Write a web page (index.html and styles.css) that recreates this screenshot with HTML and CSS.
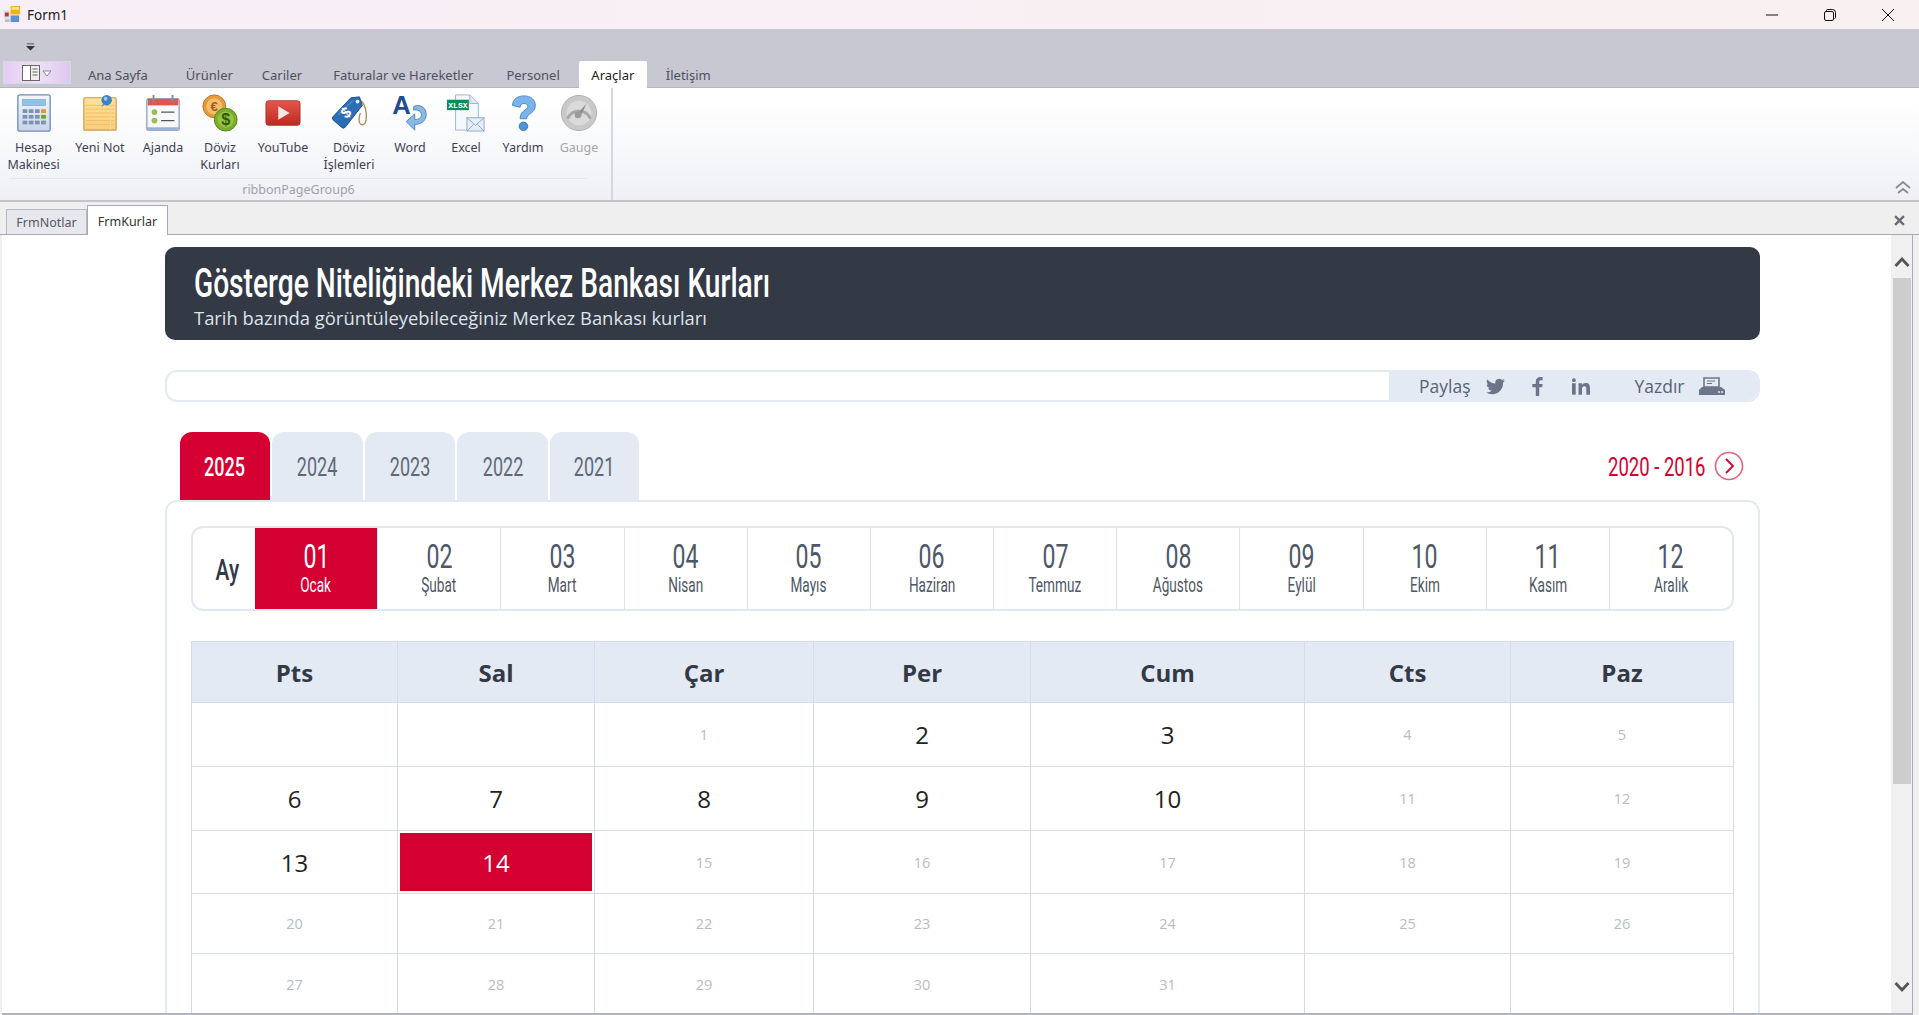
FILE: index.html
```html
<!DOCTYPE html>
<html>
<head>
  <meta charset="UTF-8">
  <title>Form1</title>
  <link rel="stylesheet" href="styles.css">
</head>
<body>
  <div class="window">
    <div class="titlebar">
      <svg class="app-icon" viewBox="0 0 18 18"><rect x="0" y="5" width="6" height="8" fill="#d8d8de"/><rect x="1" y="7" width="4" height="4" fill="#c8322a"/><rect x="7" y="0" width="10" height="9" fill="#f2b21c"/><rect x="8" y="1" width="8" height="3" fill="#fbe27a"/><rect x="7" y="10" width="9" height="7" fill="#5c8fd6"/><rect x="1" y="14" width="5" height="3" fill="#bcbcc6"/></svg>
      <span class="form-name">Form1</span>
      <div class="win-buttons">
        <svg viewBox="0 0 12 12"><path d="M0 6h12" stroke="#111" fill="none"/></svg>
        <svg viewBox="0 0 12 12"><path d="M2.5 2.5V1.5q0-1 1-1h5q3 0 3 3v5q0 1-1 1" stroke="#111" fill="none"/><rect x=".5" y="2.5" width="9" height="9" rx="1.5" stroke="#111" fill="none"/></svg>
        <svg viewBox="0 0 12 12"><path d="M0 0l12 12M12 0L0 12" stroke="#111" fill="none"/></svg>
      </div>
    </div>

    <div class="ribbon-head">
      <div class="qat"><svg viewBox="0 0 10 8"><path d="M1 0h8v1H1zM0 3h10L5 8z" fill="#333"/></svg></div>
      <div class="ribbon-tabs">
        <div class="app-btn"><svg viewBox="0 0 30 16" width="30" height="16"><rect x=".5" y=".5" width="8" height="15" fill="#fff" stroke="#666"/><rect x="8.5" y=".5" width="9" height="15" fill="#eee" stroke="#666"/><path d="M10.5 4h5M10.5 7h5M10.5 10h5" stroke="#666"/><path d="M21 6h8l-4 5z" fill="#fff" stroke="#8a8a9a"/></svg></div>
        <span class="rtab tab-ana">Ana Sayfa</span>
        <span class="rtab tab-urun">Ürünler</span>
        <span class="rtab tab-cari">Cariler</span>
        <span class="rtab tab-fat">Faturalar ve Hareketler</span>
        <span class="rtab tab-per">Personel</span>
        <span class="rtab active">Araçlar</span>
        <span class="rtab tab-ilt">İletişim</span>
      </div>
    </div>

    <div class="ribbon-panel">
      <div class="group">
        <div class="tools">
          <div class="tool">
            <svg viewBox="0 0 40 40"><defs><linearGradient id="calc" x1="0" y1="0" x2="0" y2="1"><stop offset="0" stop-color="#f4f6fb"/><stop offset="1" stop-color="#c9d5ea"/></linearGradient></defs><rect x="3" y="1" width="34" height="38" rx="2" fill="url(#calc)" stroke="#6f8cbb" stroke-width="1.4"/><rect x="8" y="6" width="24" height="6" fill="#8dc3e8" stroke="#6b9ac4" stroke-width=".6"/><g fill="#7f92b5"><rect x="8" y="16" width="5" height="4"/><rect x="14.500" y="16" width="5" height="4"/><rect x="21" y="16" width="5" height="4"/><rect x="8" y="22" width="5" height="4"/><rect x="14.500" y="22" width="5" height="4"/><rect x="21" y="22" width="5" height="4"/><rect x="8" y="28" width="5" height="4"/><rect x="14.500" y="28" width="5" height="4"/><rect x="21" y="28" width="5" height="4"/><rect x="27.500" y="28" width="5" height="4"/></g><rect x="27.500" y="16" width="5" height="4" fill="#de9335"/><rect x="27.500" y="22" width="5" height="4" fill="#6ea32e"/></svg>
            <span>Hesap<br>Makinesi</span>
          </div>
          <div class="tool">
            <svg viewBox="0 0 40 40"><defs><linearGradient id="note" x1="0" y1="0" x2="0" y2="1"><stop offset="0" stop-color="#fde29a"/><stop offset="1" stop-color="#f9cf7c"/></linearGradient></defs><rect x="3" y="4" width="34" height="34" rx="1" fill="url(#note)" stroke="#c99a4c" stroke-width="1.2"/><path d="M5 12h30M5 16h30M5 20h30M5 24h30M5 28h30M5 32h30" stroke="#f3b55c" stroke-width=".8"/><path d="M31 4v34" stroke="#f0d79c"/><path d="M22 13l5-6" stroke="#6d8fb5" stroke-width="1.5"/><circle cx="27" cy="6.500" r="5.500" fill="#3f7fc4"/><circle cx="26" cy="5" r="2" fill="#9cc8ee"/></svg>
            <span>Yeni Not</span>
          </div>
          <div class="tool">
            <svg viewBox="0 0 40 40"><rect x="3" y="5" width="34" height="33" rx="1.500" fill="#f7f8fc" stroke="#7c92bf" stroke-width="1.2"/><path d="M4 5h32v7H4z" fill="#e2554e"/><rect x="3" y="35" width="34" height="3" fill="#9db1d4"/><path d="M10 1v8M30 1v8" stroke="#8a8a8a" stroke-width="2"/><circle cx="11" cy="19" r="3" fill="#9dbb52"/><circle cx="11" cy="28" r="3" fill="#9dbb52"/><path d="M18 19h14M18 28h14" stroke="#555" stroke-width="1.400"/></svg>
            <span>Ajanda</span>
          </div>
          <div class="tool">
            <svg viewBox="0 0 40 40"><circle cx="14" cy="13" r="12" fill="#e89a3a" stroke="#b9732a"/><circle cx="14" cy="13" r="8.500" fill="#f5bd70"/><text x="14" y="18" font-size="14" text-anchor="middle" fill="#a85a12" font-family="Liberation Sans" font-weight="700">€</text><circle cx="26" cy="27" r="12" fill="#7cab2e" stroke="#5b8420"/><circle cx="26" cy="27" r="8.500" fill="#98c340"/><text x="26" y="33" font-size="17" text-anchor="middle" fill="#2e5a10" font-family="Liberation Sans" font-weight="700">$</text></svg>
            <span>Döviz<br>Kurları</span>
          </div>
          <div class="tool">
            <svg viewBox="0 0 40 40"><defs><linearGradient id="yt" x1="0" y1="0" x2="0" y2="1"><stop offset="0" stop-color="#e2574a"/><stop offset="1" stop-color="#bd2a20"/></linearGradient></defs><rect x="2" y="7" width="36" height="26" rx="3" fill="url(#yt)" stroke="#a72a22" stroke-width=".8"/><path d="M15 13l12 7-12 7z" fill="#f7e9e4"/></svg>
            <span>YouTube</span>
          </div>
          <div class="tool">
            <svg viewBox="0 0 40 40"><path d="M32 7c5 3 7 12 6 20-1 6-5 7-7 3-1-3 0-8 1-10" fill="none" stroke="#b08a5a" stroke-width="1.400"/><path d="M3 24L22 4l9-1 3 9-18 23q-2 2-4 0L3 27q-1-2 0-3z" fill="#2c6db5" stroke="#1f4f8c"/><path d="M9 22L24 7" stroke="#6ea3dd"/><circle cx="29" cy="8" r="2" fill="#e8eef6"/><text x="17" y="25" font-size="16" text-anchor="middle" fill="#fff" font-family="Liberation Sans" font-weight="700" transform="rotate(-40 17 20)">$</text></svg>
            <span>Döviz<br>İşlemleri</span>
          </div>
          <div class="tool">
            <svg viewBox="0 0 40 40"><text x="11" y="21" font-size="27" text-anchor="middle" fill="#1f4d8f" font-family="Liberation Sans" font-weight="700">A</text><path d="M24 13c8-3 14 3 13 10-1 6-6 9-12 9v6l-9-9 9-8v6c4 0 7-2 7-5 0-4-4-6-8-5z" fill="#8ab9e4" stroke="#4b86c0" stroke-width="1"/></svg>
            <span>Word</span>
          </div>
          <div class="tool">
            <svg viewBox="0 0 40 40"><path d="M9 1h15l9 9v28H9z" fill="#f5f8fd" stroke="#9fb4d4"/><path d="M24 1v9h9" fill="#dfe8f5" stroke="#9fb4d4"/><rect x="0" y="6" width="23" height="11" fill="#0f8a5a"/><text x="11.500" y="15" font-size="8.500" text-anchor="middle" fill="#fff" font-family="Liberation Mono" font-weight="700">XLSX</text><rect x="21" y="25" width="18" height="14" fill="#e4edf8" stroke="#8da7c8"/><path d="M21 25l9 8 9-8M21 39l7-7M39 39l-7-7" fill="none" stroke="#8da7c8"/></svg>
            <span>Excel</span>
          </div>
          <div class="tool">
            <svg viewBox="0 0 40 40"><path d="M9 12C9 5 15 2 21 2c7 0 12 4 12 10 0 5-3 7-6 9-2 1.500-3 3-3 5h-7c0-5 2-7 5-9 2-1.500 3-2.500 3-4 0-2-1.500-3-4-3s-4 1.500-4 4z" fill="#7ab4ea" stroke="#4a86c4"/><circle cx="20.500" cy="34" r="4.500" fill="#4f93d8" stroke="#3f78b4"/></svg>
            <span>Yardım</span>
          </div>
          <div class="tool muted">
            <svg viewBox="0 0 40 40"><circle cx="20" cy="20" r="18.500" fill="#c9c9c9" stroke="#b0b0b0"/><circle cx="20" cy="20" r="13" fill="#dadada"/><path d="M8 26a13 13 0 0 1 24 0" fill="none" stroke="#a8a8a8" stroke-width="3"/><path d="M18 21l10-11-6 13z" fill="#8f8f8f"/><circle cx="19" cy="22" r="3.500" fill="#9a9a9a"/></svg>
            <span>Gauge</span>
          </div>
        </div>
        <div class="group-name">ribbonPageGroup6</div>
      </div>
      <svg class="collapse" viewBox="0 0 16 14"><path d="M1 7l7-6 7 6M3 12l5-4 5 4" fill="none" stroke="#8a8a94" stroke-width="1.800"/></svg>
    </div>

    <div class="doc-tabs">
      <span class="dtab">FrmNotlar</span>
      <span class="dtab active">FrmKurlar</span>
      <svg class="doc-close" viewBox="0 0 10 10"><path d="M1 1l8 8M9 1L1 9" stroke="#6c6c78" stroke-width="2.200"/></svg>
    </div>

    <div class="doc">
      <div class="page">
        <div class="hero">
          <h1><span>Gösterge Niteliğindeki Merkez Bankası Kurları</span></h1>
          <p>Tarih bazında görüntüleyebileceğiniz Merkez Bankası kurları</p>
        </div>

        <div class="sharebar">
          <div class="share-tools">
            <span class="share-label">Paylaş</span>
            <svg class="ic-tw" viewBox="0 0 24 24"><path d="M23.95 4.57a10 10 0 0 1-2.82.77 4.96 4.96 0 0 0 2.16-2.72c-.95.55-2 .96-3.13 1.18a4.92 4.92 0 0 0-8.38 4.48C7.69 8.1 4.07 6.13 1.64 3.16a4.82 4.82 0 0 0-.67 2.48c0 1.71.87 3.21 2.19 4.1a4.9 4.9 0 0 1-2.23-.62v.06a4.92 4.92 0 0 0 3.95 4.83 5 5 0 0 1-2.21.08 4.94 4.94 0 0 0 4.6 3.42A9.87 9.87 0 0 1 0 19.54a14 14 0 0 0 7.56 2.21c9.05 0 14-7.5 14-13.98 0-.21 0-.42-.02-.63a9.94 9.94 0 0 0 2.41-2.57z"/></svg>
            <svg class="ic-fb" viewBox="0 0 12 22"><path d="M8 22V12h3.400l.6-4H8V5.500C8 4.300 8.400 3.700 10 3.700h2V.2C11.500.1 10.500 0 9.400 0 6.300 0 4 1.900 4 5.200V8H0v4h4v10z"/></svg>
            <svg class="ic-in" viewBox="0 0 22 20"><rect x="0" y="6" width="4.500" height="14"/><circle cx="2.300" cy="2.300" r="2.300"/><path d="M8 6h4.300v2c.8-1.400 2.500-2.400 4.500-2.400 4 0 5.200 2.500 5.200 6.400v8h-4.500v-7c0-2-.5-3.400-2.300-3.400s-3 1.300-3 3.400v7H8z"/></svg>
            <span class="share-label print-label">Yazdır</span>
            <svg class="ic-pr" viewBox="0 0 26 18"><path d="M5 1h15v9H5z" fill="none" stroke="#6b7488" stroke-width="1.600"/><path d="M8 4h8M8 6.500h5" stroke="#6b7488"/><path d="M3 10h19l4 3v5H0v-5z"/><circle cx="20" cy="15" r="1" fill="#e4eaf4"/><circle cx="23" cy="15" r="1" fill="#e4eaf4"/></svg>
          </div>
        </div>

        <div class="years">
          <div class="year-tabs">
            <a class="year active"><span>2025</span></a>
            <a class="year"><span>2024</span></a>
            <a class="year"><span>2023</span></a>
            <a class="year"><span>2022</span></a>
            <a class="year y-last"><span>2021</span></a>
          </div>
          <div class="older">
            <span class="older-text">2020 - 2016</span>
            <svg viewBox="0 0 30 30"><circle cx="15" cy="15" r="13.500" fill="none" stroke="#e8607c" stroke-width="1.600"/><path d="M12 8l7 7-7 7" fill="none" stroke="#d50032" stroke-width="1.800"/></svg>
          </div>
        </div>

        <div class="panel">
          <div class="months">
            <div class="month-label"><span>Ay</span></div>
            <div class="month active"><b>01</b><i>Ocak</i></div>
            <div class="month"><b>02</b><i>Şubat</i></div>
            <div class="month"><b>03</b><i>Mart</i></div>
            <div class="month"><b>04</b><i>Nisan</i></div>
            <div class="month"><b>05</b><i>Mayıs</i></div>
            <div class="month"><b>06</b><i>Haziran</i></div>
            <div class="month"><b>07</b><i>Temmuz</i></div>
            <div class="month"><b>08</b><i>Ağustos</i></div>
            <div class="month"><b>09</b><i>Eylül</i></div>
            <div class="month"><b>10</b><i>Ekim</i></div>
            <div class="month"><b>11</b><i>Kasım</i></div>
            <div class="month"><b>12</b><i>Aralık</i></div>
          </div>

          <table class="cal">
            <colgroup><col class="c1"><col class="c2"><col class="c3"><col class="c4"><col class="c5"><col class="c6"><col class="c7"></colgroup>
            <thead>
              <tr><th>Pts</th><th>Sal</th><th>Çar</th><th>Per</th><th>Cum</th><th>Cts</th><th>Paz</th></tr>
            </thead>
            <tbody>
              <tr class="r1"><td></td><td></td><td class="off">1</td><td>2</td><td>3</td><td class="off">4</td><td class="off">5</td></tr>
              <tr class="r2"><td>6</td><td>7</td><td>8</td><td>9</td><td>10</td><td class="off">11</td><td class="off">12</td></tr>
              <tr class="r3"><td>13</td><td class="today">14</td><td class="off">15</td><td class="off">16</td><td class="off">17</td><td class="off">18</td><td class="off">19</td></tr>
              <tr class="r4"><td class="off">20</td><td class="off">21</td><td class="off">22</td><td class="off">23</td><td class="off">24</td><td class="off">25</td><td class="off">26</td></tr>
              <tr class="r5"><td class="off">27</td><td class="off">28</td><td class="off">29</td><td class="off">30</td><td class="off">31</td><td></td><td></td></tr>
            </tbody>
          </table>
        </div>
      </div>

      <div class="scrollbar">
        <svg viewBox="0 0 16 12"><path d="M1.500 10L8 3l6.500 7" fill="none" stroke="#555" stroke-width="2.800"/></svg>
        <div class="track"><div class="thumb"></div></div>
        <svg viewBox="0 0 16 12"><path d="M1.500 2L8 9l6.500-7" fill="none" stroke="#555" stroke-width="2.800"/></svg>
      </div>
    </div>
  </div>
</body>
</html>
```

FILE: styles.css
```css
html, body {
  margin: 0;
  padding: 0;
  height: 100%;
  overflow: hidden;
}
body {
  font-family: 'Noto Sans', 'Open Sans', sans-serif;
  background: #efefef;
}
.window {
  display: flex;
  flex-direction: column;
  height: 1015px;
}

/* title bar */
.titlebar {
  height: 29px;
  display: flex;
  align-items: center;
  padding-left: 4px;
  background: linear-gradient(90deg, #f8eef6, #f9f0f1);
  flex: none;
}
.app-icon {
  width: 17px;
  height: 17px;
}
.form-name {
  margin-left: 6px;
  font-size: 13.500px;
  color: #222;
}
.win-buttons {
  margin-left: auto;
  display: flex;
  gap: 46px;
  padding-right: 25px;
}
.win-buttons svg {
  width: 12px;
  height: 12px;
}

/* ribbon */
.ribbon-head {
  height: 59px;
  background: #c7c8d1;
  flex: none;
  border-bottom: 1px solid #b4b5c0;
  box-sizing: border-box;
}
.qat {
  height: 31px;
  padding-left: 26px;
  display: flex;
  align-items: center;
}
.qat svg {
  width: 9px;
  height: 8px;
  margin-top: 5px;
}
.ribbon-tabs {
  display: flex;
  align-items: flex-start;
  padding-left: 3px;
}
.app-btn {
  width: 68px;
  height: 23px;
  margin-top: 1px;
  box-sizing: border-box;
  border: 1px solid #d8d8e2;
  background: linear-gradient(90deg, #e3cdf2, #f0e2f6 50%, #dcc8ee);
  display: flex;
  align-items: center;
  justify-content: center;
}
.rtab {
  font-size: 13px;
  color: #4d5060;
  line-height: 24px;
  padding-top: 3px;
  white-space: nowrap;
}
.tab-ana { margin-left: 17px; }
.tab-urun { margin-left: 38px; }
.tab-cari { margin-left: 29px; }
.tab-fat { margin-left: 31px; }
.tab-per { margin-left: 33px; }
.rtab.active {
  position: relative;
  margin: 1px 0 0 19px;
  width: 68px;
  padding: 2px 0 1px;
  text-align: center;
  background: #fff;
  color: #222;
  border-radius: 2px 2px 0 0;
}
.tab-ilt { margin-left: 19px; }

.ribbon-panel {
  height: 114px;
  flex: none;
  box-sizing: border-box;
  display: flex;
  justify-content: space-between;
  background: linear-gradient(180deg, #fff 10%, #f8f9fb 50%, #eff0f4);
  border-bottom: 2px solid #c4c5cc;
}
.group {
  width: 613px;
  box-sizing: border-box;
  border-right: 2px solid #d6d7de;
  display: flex;
  flex-direction: column;
}
.tools {
  display: grid;
  grid-template-columns: 67px 66px 60px 54px 72px 60px 62px 50px 64px 48px;
  height: 91px;
  padding-top: 6px;
  box-sizing: border-box;
}
.tool {
  display: flex;
  flex-direction: column;
  align-items: center;
  font-size: 12.500px;
  line-height: 17px;
  color: #3d4054;
  text-align: center;
  white-space: nowrap;
}
.tool svg {
  width: 38px;
  height: 38px;
  margin-bottom: 7px;
  overflow: visible;
}
.tool.muted {
  color: #a4a5ac;
}
.group-name {
  font-size: 12.500px;
  color: #a0a1aa;
  text-align: center;
  line-height: 21px;
  margin: 0 24px 0 10px;
  border-top: 1px solid #e6e7ec;
}
.collapse {
  width: 16px;
  height: 14px;
  align-self: flex-end;
  margin: 0 8px 5px 0;
}

/* document tabs */
.doc-tabs {
  height: 33px;
  flex: none;
  display: flex;
  align-items: flex-end;
  padding-left: 6px;
  background: #efefef;
  border-bottom: 1px solid #a9a8b8;
  box-sizing: border-box;
  position: relative;
}
.dtab {
  width: 81px;
  height: 25px;
  box-sizing: border-box;
  border: 1px solid #b8b8c4;
  border-bottom: 0;
  background: #e7e7ee;
  text-align: center;
  font-size: 12.500px;
  line-height: 25px;
  color: #555866;
}
.dtab.active {
  height: 30px;
  background: #fff;
  color: #333;
  line-height: 26px;
  padding-top: 3px;
  margin-bottom: -1px;
  border-color: #a9a8b8;
}
.doc-close {
  position: absolute;
  right: 14px;
  top: 13px;
  width: 11px;
  height: 11px;
}

/* framed web page */
.doc {
  flex: 1;
  min-height: 0;
  display: flex;
  margin: 0 6px 0 2px;
  background: #fff;
  border-right: 1px solid #a9a8b8;
  border-bottom: 2px solid #b4b4be;
  overflow: hidden;
}
.page {
  flex: 1;
  min-width: 0;
  padding: 12px 0 0 163px;
  box-sizing: border-box;
  overflow: hidden;
}
.page > * {
  width: 1595px;
  box-sizing: border-box;
}
.scrollbar {
  width: 21px;
  flex: none;
  background: #f0f0f0;
  display: flex;
  flex-direction: column;
  align-items: center;
}
.scrollbar svg {
  width: 16px;
  height: 12px;
  flex: none;
}
.scrollbar svg:first-child {
  margin-top: 21px;
}
.scrollbar svg:last-child {
  margin-bottom: 20px;
}
.track {
  flex: 1;
  width: 18px;
  padding-top: 10px;
}
.thumb {
  height: 506px;
  background: #cdcdcd;
}

.hero {
  height: 93px;
  background: #333945;
  border-radius: 10px;
  padding: 14px 29px 0;
  color: #fff;
}
.hero h1 {
  margin: 0;
  font-family: Roboto, sans-serif;
  font-weight: 500;
  font-size: 40px;
  line-height: 45px;
  white-space: nowrap;
}
.hero h1 span {
  display: inline-block;
  transform: scaleX(.703);
  transform-origin: left center;
}
.hero p {
  margin: 0;
  font-family: 'Open Sans', sans-serif;
  font-size: 18.400px;
  line-height: 24px;
  color: #dfe2e9;
  white-space: nowrap;
}

.sharebar {
  height: 32px;
  margin-top: 30px;
  border: 2px solid #e4eaf4;
  border-radius: 12px;
  display: flex;
  justify-content: flex-end;
  overflow: hidden;
}
.share-tools {
  width: 369px;
  background: #e4eaf4;
  display: flex;
  align-items: center;
  padding-left: 30px;
  box-sizing: border-box;
  fill: #6b7488;
}
.share-label {
  font-family: 'Open Sans', sans-serif;
  font-size: 17.500px;
  color: #596275;
}
.ic-tw { width: 19px; height: 19px; margin-left: 15px; }
.ic-fb { width: 11px; height: 19px; margin-left: 27px; }
.ic-in { width: 18px; height: 17px; margin-left: 29px; }
.print-label { margin-left: 45px; }
.ic-pr { width: 26px; height: 18px; margin-left: 14px; }

.years {
  height: 68px;
  margin-top: 30px;
  padding: 0 16px 0 15px;
  display: flex;
  justify-content: space-between;
  align-items: flex-start;
}
.year-tabs {
  display: flex;
  gap: 2px;
}
.year {
  width: 90.750px;
  height: 68px;
  line-height: 72px;
  text-align: center;
  background: #e4eaf4;
  border-radius: 12px 12px 0 0;
  font-family: Roboto, sans-serif;
  font-size: 25px;
  color: #5f6877;
}
.year.y-last { width: 89px; }
.year span {
  display: inline-block;
  transform: scaleX(.72);
}
.year.active {
  width: 89.750px;
  background: #d50032;
  color: #fff;
  font-weight: 500;
}
.older {
  display: flex;
  align-items: center;
  height: 70px;
  gap: 10px;
}
.older-text {
  font-family: Roboto, sans-serif;
  font-size: 25px;
  color: #d50032;
  display: inline-block;
  width: 96px;
  white-space: nowrap;
  transform: scaleX(.74);
  transform-origin: left center;
}
.older svg {
  width: 30px;
  height: 30px;
  margin-top: -3px;
}

.panel {
  border: 2px solid #e4eaf4;
  border-bottom: 0;
  border-radius: 12px 12px 0 0;
  padding: 24px 24px 0;
  height: 520px;
  overflow: hidden;
}
.months {
  display: flex;
  height: 85px;
  border: 2px solid #e2e8f2;
  border-radius: 12px;
  box-sizing: border-box;
  overflow: hidden;
}
.month-label {
  width: 62px;
  flex: none;
  display: flex;
  align-items: center;
  justify-content: center;
  padding: 2px 0 0 6px;
  box-sizing: border-box;
  font-family: Roboto, sans-serif;
  font-size: 29px;
  font-weight: 500;
  color: #333945;
}
.month-label span {
  transform: scaleX(.72);
}
.month {
  flex: 1;
  display: flex;
  flex-direction: column;
  align-items: center;
  border-left: 1px solid #dbe3f1;
  color: #4e5766;
  font-family: Roboto, sans-serif;
  padding-top: 11px;
  box-sizing: border-box;
}
.month b, .month i {
  display: block;
  font-weight: 400;
  font-style: normal;
  white-space: nowrap;
}
.month b {
  font-size: 33px;
  line-height: 36px;
  transform: scaleX(.7);
}
.month i {
  font-size: 20px;
  line-height: 20px;
  transform: scaleX(.68);
}
.month.active {
  background: #d50032;
  color: #fff;
  border-left: 0;
}

.cal {
  width: 1542px;
  margin-top: 30px;
  border-collapse: collapse;
  table-layout: fixed;
  font-family: 'Open Sans', sans-serif;
}
.c1 { width: 206px; }
.c2 { width: 197px; }
.c3 { width: 219px; }
.c4 { width: 217px; }
.c5 { width: 274px; }
.c6 { width: 206px; }
.c7 { width: 223px; }
.cal th, .cal td {
  border: 1px solid #d3dcee;
  text-align: center;
  padding: 0;
}
.cal th {
  height: 60px;
  background: #e4eaf4;
  font-size: 24px;
  font-weight: 700;
  color: #333945;
}
.cal td {
  font-size: 24px;
  color: #222;
}
.r1 td, .r2 td { height: 63px; }
.r3 td { height: 62px; }
.r4 td { height: 59px; }
.r5 td { height: 61px; }
.cal td.off {
  font-size: 14.500px;
  color: #b9bcc2;
}
.cal td.today {
  background: #d50032;
  color: #fff;
  box-shadow: inset 0 0 0 2px #fff;
}
```
